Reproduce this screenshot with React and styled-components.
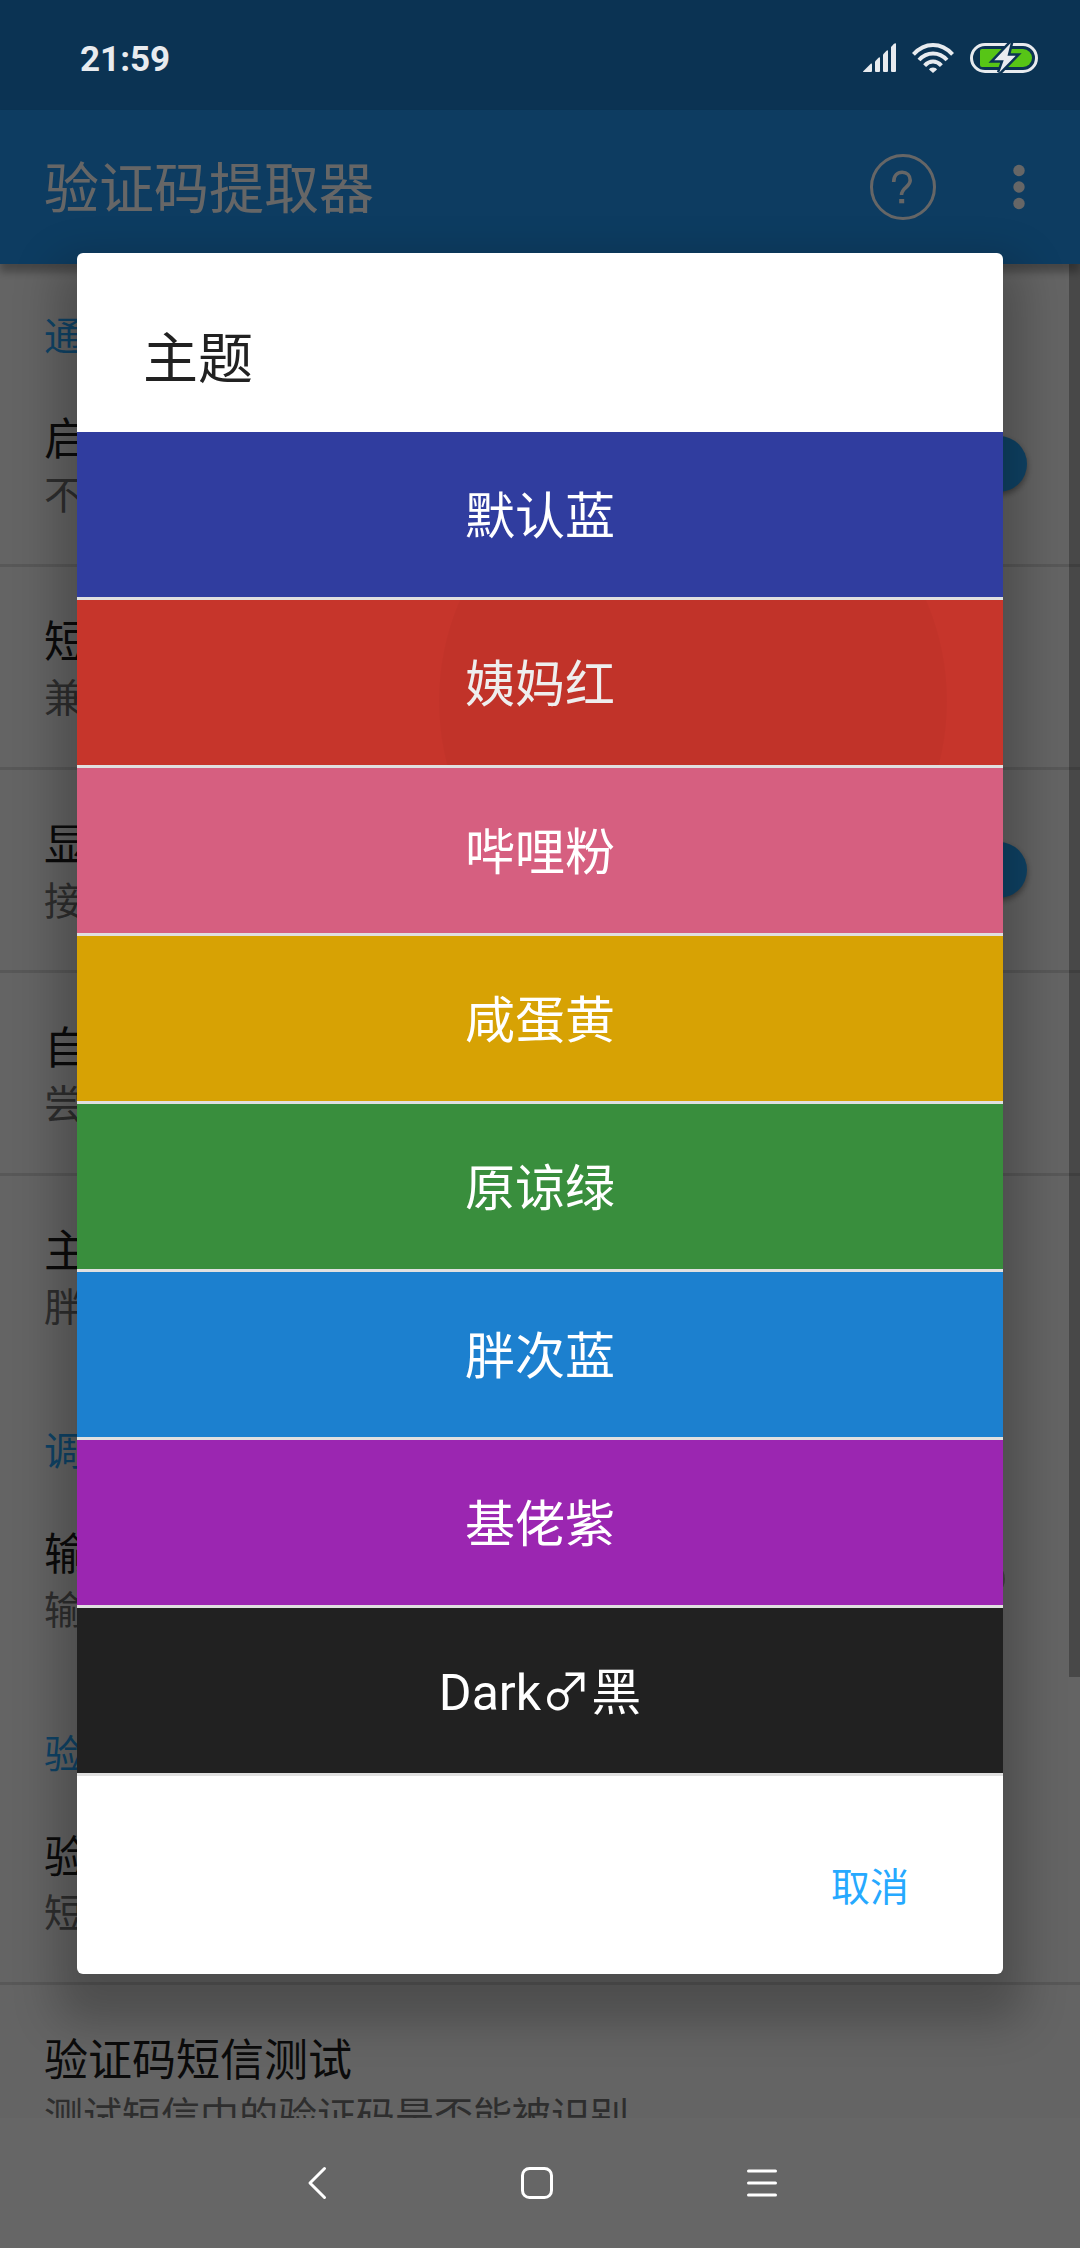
import React from "react";
import styled, { createGlobalStyle } from "styled-components";

const GlobalStyle = createGlobalStyle`
  *, *::before, *::after { box-sizing: border-box; }
  body {
    margin: 0;
    background: #fafafa;
    font-family: Roboto, "Noto Sans CJK SC", sans-serif;
    font-size: 44px;
  }
  button { font: inherit; border: 0; padding: 0; margin: 0; background: none; color: inherit; cursor: pointer; }
`;

const ACCENT = "#26a9ff";

const Screen = styled.div`
  position: relative;
  display: flex;
  flex-direction: column;
  height: 100vh;
  overflow: hidden;
`;

const StatusBar = styled.header`
  flex: none;
  height: 110px;
  background: #1c80cf;
`;

/* Stays above the scrim while the bar behind it is dimmed. */
const StatusContent = styled.div`
  position: relative;
  z-index: 3;
  display: flex;
  align-items: center;
  gap: 16px;
  height: 116px;
  padding: 0 42px 0 80px;
  color: #e8ebef;
`;

const Clock = styled.time`
  margin-right: auto;
  padding-top: 4px;
  font-size: 35px;
  line-height: 40px;
  font-weight: 700;
`;

const AppBar = styled.div`
  position: relative;
  flex: none;
  display: flex;
  align-items: center;
  gap: 66px;
  height: 154px;
  padding: 0 44px;
  background: #2196f3;
  color: #fff;
  box-shadow: 0 8px 8px rgba(0, 0, 0, 0.3);
  z-index: 1;
`;

const AppTitle = styled.h1`
  flex: 1;
  margin: 0;
  padding-top: 4px;
  font-size: 55px;
  line-height: 66px;
  font-weight: 400;
`;

const IconButton = styled.button`
  display: flex;
  svg { display: block; }
`;

const Settings = styled.main`
  position: relative;
  flex: 1;
  min-height: 0;
  overflow: hidden;
  background: #fafafa;
`;

const Category = styled.h2`
  margin: 0;
  padding: 46px 44px 0;
  font-size: 39px;
  line-height: 54px;
  font-weight: 400;
  color: ${ACCENT};
`;

const Preference = styled.label`
  display: flex;
  align-items: center;
  justify-content: space-between;
  padding: 44px;
  border-bottom: 3px solid ${(p) => (p.$last ? "transparent" : "#dcdcdc")};
`;

const PrefText = styled.span`
  display: flex;
  flex-direction: column;
`;

const PrefTitle = styled.span`
  font-size: 44px;
  line-height: 64px;
  color: #1c1c1c;
`;

const PrefSummary = styled.span`
  font-size: 39px;
  line-height: 48px;
  color: #737373;
`;

const Switch = styled.input`
  appearance: none;
  position: relative;
  width: 99px;
  height: 56px;
  margin: 0 9px 0 0;

  &::before {
    content: "";
    position: absolute;
    inset: 9px 22px 9px 8px;
    border-radius: 19px;
    background: #b0b0b0;
  }
  &::after {
    content: "";
    position: absolute;
    top: 0;
    left: 0;
    width: 56px;
    height: 56px;
    border-radius: 50%;
    background: #f0f0f0;
    box-shadow: 0 3px 6px rgba(0, 0, 0, 0.4);
  }
  &:checked::before { background: #a5dbff; }
  &:checked::after { left: auto; right: 0; background: ${ACCENT}; }
`;

const ScrollThumb = styled.div`
  position: absolute;
  top: 0;
  right: 0;
  width: 11px;
  height: 76.2%;
  background: rgba(0, 0, 0, 0.28);
`;

const NavBar = styled.nav`
  flex: none;
  display: flex;
  justify-content: center;
  align-items: center;
  gap: 178px;
  height: 130px;
  background: #fff;
`;

const NavButton = styled.button`
  position: relative;
  z-index: 3;
  display: flex;
  color: #fff;
`;

const Scrim = styled.div`
  position: absolute;
  inset: 0;
  z-index: 2;
  display: flex;
  align-items: center;
  padding: 110px 77px 131px;
  background: rgba(0, 0, 0, 0.6);
`;

const Dialog = styled.section`
  flex: 1;
  overflow: hidden;
  border-radius: 6px;
  background: #fff;
  box-shadow: 0 28px 45px 20px rgba(0, 0, 0, 0.23);
`;

const DialogTitle = styled.h2`
  margin: 0;
  padding: 73px 66px 40px;
  font-size: 55px;
  line-height: 66px;
  font-weight: 400;
  color: #212121;
`;

const ThemeList = styled.ul`
  margin: 0;
  padding: 0;
  list-style: none;
`;

const ThemeItem = styled.li`
  display: flex;
  border-bottom: 3px solid #e0e0e0;
`;

const ThemeButton = styled.button`
  position: relative;
  flex: 1;
  height: 165px;
  padding-top: 4px;
  overflow: hidden;
  background: ${(p) => p.$color};
  color: ${(p) => (p.$pressed ? "#f4f4f4" : "#fff")};
  font-size: 50px;
  line-height: 60px;
`;

const Ripple = styled.span`
  position: absolute;
  top: -153px;
  left: 362px;
  width: 508px;
  height: 508px;
  border-radius: 50%;
  background: rgba(0, 0, 0, 0.025);
`;

const DialogActions = styled.footer`
  display: flex;
  justify-content: flex-end;
  align-items: center;
  height: 198px;
  padding: 26px 94px 0;
`;

const TextButton = styled.button`
  font-size: 39px;
  line-height: 52px;
  color: ${ACCENT};
`;

const themes = [
  { name: "默认蓝", color: "#303d9f" },
  { name: "姨妈红", color: "#c6352b", pressed: true },
  { name: "哔哩粉", color: "#d65f80" },
  { name: "咸蛋黄", color: "#d7a204" },
  { name: "原谅绿", color: "#398e3d" },
  { name: "胖次蓝", color: "#1c80cf" },
  { name: "基佬紫", color: "#9b26b1" },
  { name: "Dark♂黑", color: "#212121" },
];

const groups = [
  {
    title: "通知",
    items: [
      { title: "启用", summary: "不启用则不提取", checked: true },
      { title: "短信", summary: "兼容模式" },
      { title: "显示", summary: "接收时显示", checked: true },
      { title: "自动", summary: "尝试自动输入" },
      { title: "主题", summary: "胖次蓝" },
    ],
  },
  { title: "调试", items: [{ title: "输出", summary: "输出日志", checked: false }] },
  {
    title: "验证码",
    items: [
      { title: "验证码关键字", summary: "短信关键字" },
      { title: "验证码短信测试", summary: "测试短信中的验证码是否能被识别" },
    ],
  },
];

function SignalIcon() {
  return (
    <svg width="33" height="30" viewBox="0 0 33 30" fill="currentColor" aria-hidden="true">
      <path d="M0 28.5 8 20.5Q9 20 9 21.5V28Q9 29 8 29H0.5Q-.2 29 0 28.5Z" />
      <path d="M12 18.500 15.500 14.800Q17 13.800 17 15V28Q17 29 16 29H13Q12 29 12 28Z" />
      <path d="M20 11.500 23.500 7.800Q25 6.800 25 8V28Q25 29 24 29H21Q20 29 20 28Z" />
      <path d="M28 4 31 .8Q33-.6 33 1V28Q33 29 32 29H29Q28 29 28 28Z" />
    </svg>
  );
}

function WifiIcon() {
  return (
    <svg width="42" height="30" viewBox="0 0 42 30" fill="none" stroke="currentColor" strokeWidth="4" aria-hidden="true">
      <path d="M1.400 11.400Q10 2 21 2T40.600 11.400" />
      <path d="M7 17Q13 10.500 21 10.500T35 17" />
      <path d="M12.600 22.600Q16.500 18.600 21 18.600T29.400 22.600" />
      <path d="M21 24.500c2 0 3.500.8 4 2L21 30l-4-3.500c.5-1.200 2-2 4-2Z" fill="currentColor" stroke="none" />
    </svg>
  );
}

function BatteryIcon() {
  return (
    <svg width="68" height="30" viewBox="0 0 68 30" aria-hidden="true">
      <rect x="1.500" y="1.500" width="65" height="27" rx="13.500" fill="none" stroke="currentColor" strokeWidth="3" />
      <path d="M10 8Q10 6 12 6H53a9 9 0 0 1 0 18H12Q10 24 10 22Z" fill="#57c516" />
      <path
        d="M40.700 0 24.300 17.300H33.700L29.300 29.500 45.700 12.800H37.500Z"
        fill="currentColor"
        stroke="#0b3353"
        strokeWidth="5"
        paintOrder="stroke"
      />
    </svg>
  );
}

function HelpIcon() {
  return (
    <svg width="66" height="66" viewBox="0 0 66 66" fill="none" stroke="currentColor" aria-hidden="true">
      <circle cx="33" cy="33" r="31.500" strokeWidth="3" />
      <path d="M23.700 28c0-6.500 3.800-9.700 8.500-9.700s8 3 8 8c0 7-8.700 7-8.700 14.700" strokeWidth="3.600" />
      <path d="M31.700 45v4.300" strokeWidth="5" />
    </svg>
  );
}

function MoreIcon() {
  return (
    <svg width="34" height="66" viewBox="0 0 34 66" fill="currentColor" aria-hidden="true">
      <circle cx="17" cy="16.500" r="5.700" />
      <circle cx="17" cy="33" r="5.700" />
      <circle cx="17" cy="49.500" r="5.700" />
    </svg>
  );
}

function NavIcon({ children }) {
  return (
    <svg width="44" height="44" viewBox="0 0 44 44" fill="none" stroke="currentColor" strokeWidth="3" strokeLinecap="round" strokeLinejoin="round" aria-hidden="true">
      {children}
    </svg>
  );
}

export default function App() {
  return (
    <Screen>
      <GlobalStyle />
      <StatusBar>
        <StatusContent>
          <Clock>21:59</Clock>
          <SignalIcon />
          <WifiIcon />
          <BatteryIcon />
        </StatusContent>
      </StatusBar>

      <AppBar>
        <AppTitle>验证码提取器</AppTitle>
        <IconButton type="button" aria-label="帮助"><HelpIcon /></IconButton>
        <IconButton type="button" aria-label="更多"><MoreIcon /></IconButton>
      </AppBar>

      <Settings>
        {groups.map((group) => (
          <React.Fragment key={group.title}>
            <Category>{group.title}</Category>
            {group.items.map((item, i) => (
              <Preference
                key={item.title}
                as={item.checked === undefined ? "div" : "label"}
                $last={i === group.items.length - 1}
              >
                <PrefText>
                  <PrefTitle>{item.title}</PrefTitle>
                  <PrefSummary>{item.summary}</PrefSummary>
                </PrefText>
                {item.checked !== undefined && (
                  <Switch type="checkbox" role="switch" defaultChecked={item.checked} />
                )}
              </Preference>
            ))}
          </React.Fragment>
        ))}
        <ScrollThumb />
      </Settings>

      <NavBar>
        <NavButton type="button" aria-label="返回">
          <NavIcon><path d="M28.500 7.500 14 22 28.500 36.500" /></NavIcon>
        </NavButton>
        <NavButton type="button" aria-label="主页">
          <NavIcon><rect x="4.500" y="7.500" width="29" height="29" rx="7" /></NavIcon>
        </NavButton>
        <NavButton type="button" aria-label="最近任务">
          <NavIcon><path d="M8.500 10H35.500M8.500 22H35.500M8.500 34H35.500" /></NavIcon>
        </NavButton>
      </NavBar>

      <Scrim>
        <Dialog role="dialog" aria-modal="true" aria-labelledby="theme-title">
          <DialogTitle id="theme-title">主题</DialogTitle>
          <ThemeList>
            {themes.map((theme) => (
              <ThemeItem key={theme.name}>
                <ThemeButton type="button" $color={theme.color} $pressed={theme.pressed}>
                  {theme.pressed && <Ripple />}
                  {theme.name}
                </ThemeButton>
              </ThemeItem>
            ))}
          </ThemeList>
          <DialogActions>
            <TextButton type="button">取消</TextButton>
          </DialogActions>
        </Dialog>
      </Scrim>
    </Screen>
  );
}
